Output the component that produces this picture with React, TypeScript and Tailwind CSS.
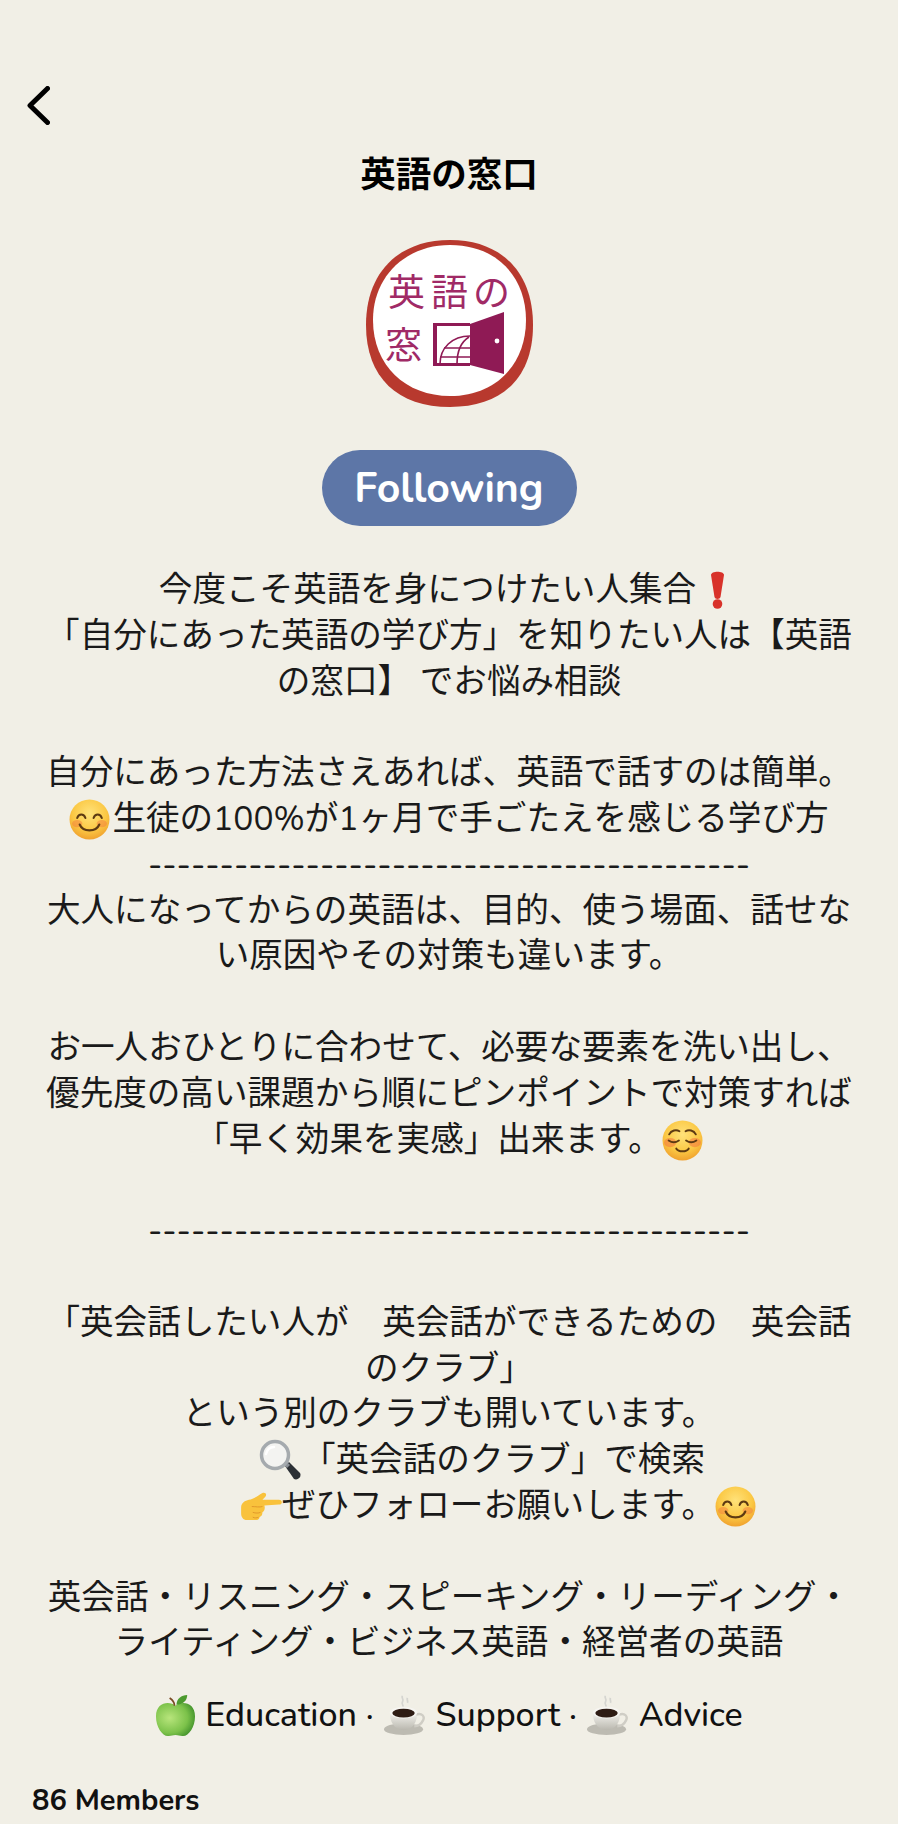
import React from "react";

const cjk = { fontFamily: 'Nunito, "Noto Sans CJK JP", "Noto Sans", sans-serif' };

function Smile() {
  return (
    <svg viewBox="0 0 40 40" className="inline-block w-[41px] h-[41px] mr-[2px] align-[-10px]">
      <defs>
        <radialGradient id="fy" cx="50%" cy="35%" r="70%">
          <stop offset="0%" stopColor="#ffe27a" />
          <stop offset="60%" stopColor="#fbc844" />
          <stop offset="100%" stopColor="#ee9a2a" />
        </radialGradient>
      </defs>
      <circle cx="20" cy="20" r="19.500" fill="url(#fy)" />
      <ellipse cx="8" cy="24" rx="5" ry="3.500" fill="#f2763f" opacity="0.45" />
      <ellipse cx="32" cy="24" rx="5" ry="3.500" fill="#f2763f" opacity="0.45" />
      <path d="M8 18.500c1.500-4.500 6.500-4.500 8 0M24 18.500c1.500-4.500 6.500-4.500 8 0" fill="none" stroke="#5d3a12" strokeWidth="2" strokeLinecap="round" />
      <path d="M10.500 25c3 7.500 16 7.500 19 0" fill="none" stroke="#5d3a12" strokeWidth="2.200" strokeLinecap="round" />
    </svg>
  );
}

function Relieved() {
  return (
    <svg viewBox="0 0 40 40" className="inline-block w-[41px] h-[41px] align-[-10px]">
      <circle cx="20" cy="20" r="19.500" fill="url(#fy)" />
      <ellipse cx="8" cy="22" rx="6" ry="4.500" fill="#f2763f" opacity="0.55" />
      <ellipse cx="32" cy="22" rx="6" ry="4.500" fill="#f2763f" opacity="0.55" />
      <path d="M6.500 20c3 2 7 2 10 0M23.500 20c3 2 7 2 10 0" fill="none" stroke="#5d3a12" strokeWidth="1.900" strokeLinecap="round" />
      <path d="M7 14c2-4 7-5 10-3M33 14c-2-4-7-5-10-3" fill="none" stroke="#5d3a12" strokeWidth="1.900" strokeLinecap="round" />
      <path d="M14 28c2 3.400 10 3.400 12 0" fill="none" stroke="#5d3a12" strokeWidth="2" strokeLinecap="round" />
    </svg>
  );
}

function Exclaim() {
  return (
    <svg viewBox="0 0 16 40" className="inline-block w-[17px] h-[40px] mx-[13px] align-[-9px]">
      <path d="M1.500 5c0-4.500 13-4.500 13 0l-3.500 22c-.5 2.600-5.500 2.600-6 0z" fill="#d8322a" />
      <circle cx="8" cy="34" r="4.800" fill="#d8322a" />
    </svg>
  );
}

function Magnifier() {
  return (
    <svg viewBox="0 0 44 44" className="inline-block w-[44px] h-[44px] align-[-12px]">
      <path d="M27 27l4-4 11 11c2 3-2 8-6 6z" fill="#2c3035" />
      <path d="M25 25l3-3 4 4-3 3z" fill="#8b9096" />
      <circle cx="17" cy="16" r="13.500" fill="#f3f3f1" stroke="#a5aaae" strokeWidth="3.500" />
      <path d="M8 15c1-4 4-7 8-7" stroke="#fff" strokeWidth="2.500" fill="none" strokeLinecap="round" />
    </svg>
  );
}

function Pointing() {
  return (
    <svg viewBox="0 0 44 32" className="inline-block w-[43px] h-[31px] align-[-6px]">
      <path d="M2 16c0-5 4-7 8-8 5-1 9-4 14-7 3-1 5 1 3 4l-3 3h17c4 0 4 5 0 5l-15 1c1 3 0 6-2 7 0 3-1 4-3 5 0 2-2 3-4 3H8c-4 0-6-3-6-7z" fill="#f9c23c" />
      <path d="M13 15c4 0 8 1 11 0M14 21c3 1 6 1 8 0M14 26c2 1 4 1 6 0" stroke="#e0982a" strokeWidth="1" fill="none" />
    </svg>
  );
}

function Apple() {
  return (
    <svg viewBox="0 0 42 44" className="inline-block w-[41px] h-[43px]">
      <defs>
        <radialGradient id="ag" cx="35%" cy="45%" r="70%">
          <stop offset="0%" stopColor="#b8e57c" />
          <stop offset="65%" stopColor="#7cc24a" />
          <stop offset="100%" stopColor="#3f8f2a" />
        </radialGradient>
      </defs>
      <path d="M21 12C15 7 1 8 1 23c0 11 7 21 13 20 3 0 4-1 7-1s4 1 7 1c6 1 13-9 13-20C41 8 27 7 21 12z" fill="url(#ag)" />
      <path d="M20 12c0-3-2-6-5-8" stroke="#7a4a24" strokeWidth="1.800" fill="none" />
      <path d="M22 11c0-6 5-10 11-10 0 6-5 10-11 10z" fill="#4c9a2e" />
    </svg>
  );
}

function Coffee() {
  return (
    <svg viewBox="0 0 42 42" className="inline-block w-[41px] h-[41px] mx-[1.5px]">
      <defs>
        <linearGradient id="cup" x1="0" y1="0" x2="0" y2="1">
          <stop offset="0%" stopColor="#f4f3ee" />
          <stop offset="100%" stopColor="#b9b7ae" />
        </linearGradient>
      </defs>
      <path d="M19 1c-2 2 2 3 0 6s2 3 0 5M24 3c-1 2 1 3 0 5" stroke="#d5d5d0" strokeWidth="1.800" fill="none" />
      <ellipse cx="20" cy="35" rx="20" ry="6" fill="#bdbbb2" />
      <path d="M6 18h28c0 9-4 18-14 18S6 27 6 18z" fill="url(#cup)" />
      <path d="M33 20c6-2 9 2 7 6s-6 6-9 6" stroke="#cfcdc5" strokeWidth="2.500" fill="none" />
      <ellipse cx="20" cy="18" rx="14" ry="6" fill="#f6f5f1" />
      <ellipse cx="20" cy="18.500" rx="11.500" ry="4.500" fill="#2e1c14" />
    </svg>
  );
}

function Logo() {
  return (
    <svg viewBox="0 0 167 167" className="w-[167px] h-[167px] block">
      <path d="M84 0C136 0 167 33 167 85C167 138 136 167 84 167C32 167 0 138 0 85C0 33 32 0 84 0Z" fill="#b8392e" />
      <path d="M84 5C132 5 160 38 160 80C160 126 128 156 84 156C40 156 7 126 7 80C7 36 40 5 84 5Z" fill="#ffffff" />
      <g fontSize="37" fill="#a02a66" style={{ fontFamily: '"Noto Sans CJK JP", sans-serif' }}>
        <text x="22" y="66">英</text>
        <text x="65" y="66">語</text>
        <text x="107" y="66">の</text>
        <text x="19" y="119">窓</text>
      </g>
      <path d="M67 83h37v3H71v37h33v3H67z" fill="#8f1a55" />
      <path d="M104 84L138 72V134L104 125z" fill="#8f1a55" />
      <circle cx="131" cy="101" r="2.400" fill="#fff" />
      <g fill="none" stroke="#8f1a55" strokeWidth="1.600">
        <path d="M74 124c0-16 12-28 30-28" />
        <path d="M103 97c-8 5-12 15-12 27" />
        <path d="M78 108h26M74 117h30" />
      </g>
    </svg>
  );
}

function Line({ children, className = "" }: { children?: React.ReactNode; className?: string }) {
  return <div className={"h-[45.8px] leading-[45.8px] whitespace-pre " + className}>{children}</div>;
}

function Dashes() {
  return <div className="h-[45.8px] leading-[45.8px] whitespace-pre font-medium">{"-".repeat(42)}</div>;
}

export default function App() {
  return (
    <div className="w-[898px] h-[1824px] bg-[#f1efe6] overflow-hidden text-black flex flex-col">
      <svg viewBox="0 0 23 39" className="w-[23px] h-[39px] ml-[27px] mt-[86px] shrink-0">
        <path d="M20.500 2.500L3 19.500L20.500 36.500" fill="none" stroke="#000" strokeWidth="5" strokeLinecap="round" strokeLinejoin="round" />
      </svg>
      <h1 className="mt-[27.5px] h-[46px] leading-[46px] text-center text-[35.5px] font-bold" style={cjk}>
        英語の窓口
      </h1>
      <div className="mt-[41.5px] flex justify-center">
        <Logo />
      </div>
      <div className="mt-[43px] flex justify-center">
        <div className="w-[255px] h-[76px] rounded-[38px] bg-[#5d76a7] text-white flex items-center justify-center pt-[1px] text-[41px] font-bold font-['Nunito','Lato',sans-serif]">
          Following
        </div>
      </div>
      <div className="mt-[42px] text-center text-[33.6px] text-[#1a1a1a]" style={cjk}>
        <Line>今度こそ英語を身につけたい人集合<Exclaim /></Line>
        <Line>「自分にあった英語の学び方」を知りたい人は【英語</Line>
        <Line>の窓口】 でお悩み相談</Line>
        <Line />
        <Line>自分にあった方法さえあれば、英語で話すのは簡単。</Line>
        <Line><Smile />生徒の100%が1ヶ月で手ごたえを感じる学び方</Line>
        <Dashes />
        <Line>大人になってからの英語は、目的、使う場面、話せな</Line>
        <Line>い原因やその対策も違います。</Line>
        <Line />
        <Line>お一人おひとりに合わせて、必要な要素を洗い出し、</Line>
        <Line>優先度の高い課題から順にピンポイントで対策すれば</Line>
        <Line>「早く効果を実感」出来ます。<Relieved /></Line>
        <Line />
        <Dashes />
        <Line />
        <Line>「英会話したい人が　英会話ができるための　英会話</Line>
        <Line>のクラブ」</Line>
        <Line>という別のクラブも開いています。</Line>
        <Line className="pl-[65px]"><Magnifier />「英会話のクラブ」で検索</Line>
        <Line className="pl-[99px]"><Pointing />ぜひフォローお願いします。<Smile /></Line>
        <Line />
        <Line>英会話・リスニング・スピーキング・リーディング・</Line>
        <Line>ライティング・ビジネス英語・経営者の英語</Line>
      </div>
      <div className="mt-[23px] h-[50px] flex justify-center items-center text-[34px] leading-[50px] font-medium text-[#111] font-['Nunito','Lato',sans-serif] whitespace-pre">
        <Apple /> Education · <Coffee /> Support · <Coffee /> Advice
      </div>
      <div className="mt-[43px] ml-[32px] text-[29px] leading-[36px] font-bold text-[#111] font-['Nunito','Lato',sans-serif]">
        86 Members
      </div>
    </div>
  );
}
